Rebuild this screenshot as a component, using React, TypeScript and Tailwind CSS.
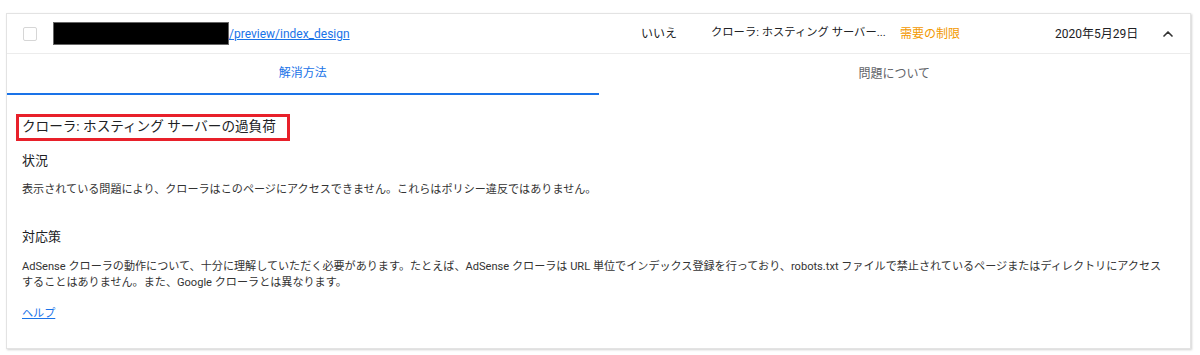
import React from "react";
import { ChevronUp } from "lucide-react";

const font = { fontFamily: 'Roboto, "Noto Sans CJK JP", "Noto Sans", sans-serif' };

export default function App() {
  return (
    <div className="w-[1200px] h-[355px] bg-white pt-[13px] pl-[6px]" style={font}>
      {/* Issue card */}
      <div className="w-[1185px] h-[336px] bg-white border border-[#e3e3e3] shadow-[1px_1px_2px_rgba(0,0,0,0.18)] flex flex-col">
        {/* Summary row */}
        <div className="h-[40px] flex items-center border-b border-[#ececec] text-[12px] text-[#202124] flex-none">
          <div className="w-[14px] h-[14px] ml-[16px] border-[1.5px] border-[#d6d6d6] rounded-[2px] flex-none" />
          <div className="w-[588px] ml-[16px] flex items-center flex-none">
            <div className="w-[176px] h-[23px] bg-black border border-[#666] flex-none" />
            <a className="text-[12px] text-[#1a73e8] underline leading-none">/preview/index_design</a>
          </div>
          <div className="w-[70px] flex-none">いいえ</div>
          <div className="w-[189px] flex-none whitespace-nowrap text-[11.3px]">クローラ: ホスティング サーバー...</div>
          <div className="w-[155px] text-[#f29900] flex-none">需要の制限</div>
          <div className="w-[105px] flex-none">2020年5月29日</div>
          <ChevronUp className="w-[16px] h-[16px] text-[#333]" strokeWidth={2.5} />
        </div>

        {/* Tabs */}
        <div className="h-[41px] flex flex-none text-[12px]">
          <div className="flex-1 flex items-center justify-center text-[#1a73e8] border-b-2 border-[#1a73e8] pb-[1px]">
            解消方法
          </div>
          <div className="flex-1 flex items-center justify-center text-[#5f6368] pb-[1px]">
            問題について
          </div>
        </div>

        {/* Resolution content */}
        <div className="pl-[9px] pt-[19px] text-[#333]">
          <div className="inline-block border-[3px] border-[#e8202a] pl-[3px] pr-[11px] h-[27px] leading-[19px] text-[13.6px] text-[#202124]">
            クローラ: ホスティング サーバーの過負荷
          </div>
          <div className="pl-[6px]">
            <h3 className="text-[13px] mt-[11px] leading-[18px] text-[#202124]">状況</h3>
            <p className="text-[11.1px] mt-[12px] leading-[16px]">
              表示されている問題により、クローラはこのページにアクセスできません。これらはポリシー違反ではありません。
            </p>
            <h3 className="text-[13px] mt-[30px] leading-[18px] text-[#202124]">対応策</h3>
            <p className="text-[11.1px] mt-[13px] leading-[16px]">
              AdSense クローラの動作について、十分に理解していただく必要があります。たとえば、AdSense クローラは URL 単位でインデックス登録を行っており、robots.txt ファイルで禁止されているページまたはディレクトリにアクセス
              <br />
              することはありません。また、Google クローラとは異なります。
            </p>
            <a className="inline-block mt-[15px] text-[11.1px] leading-[16px] text-[#1a73e8] underline">ヘルプ</a>
          </div>
        </div>
      </div>
    </div>
  );
}
